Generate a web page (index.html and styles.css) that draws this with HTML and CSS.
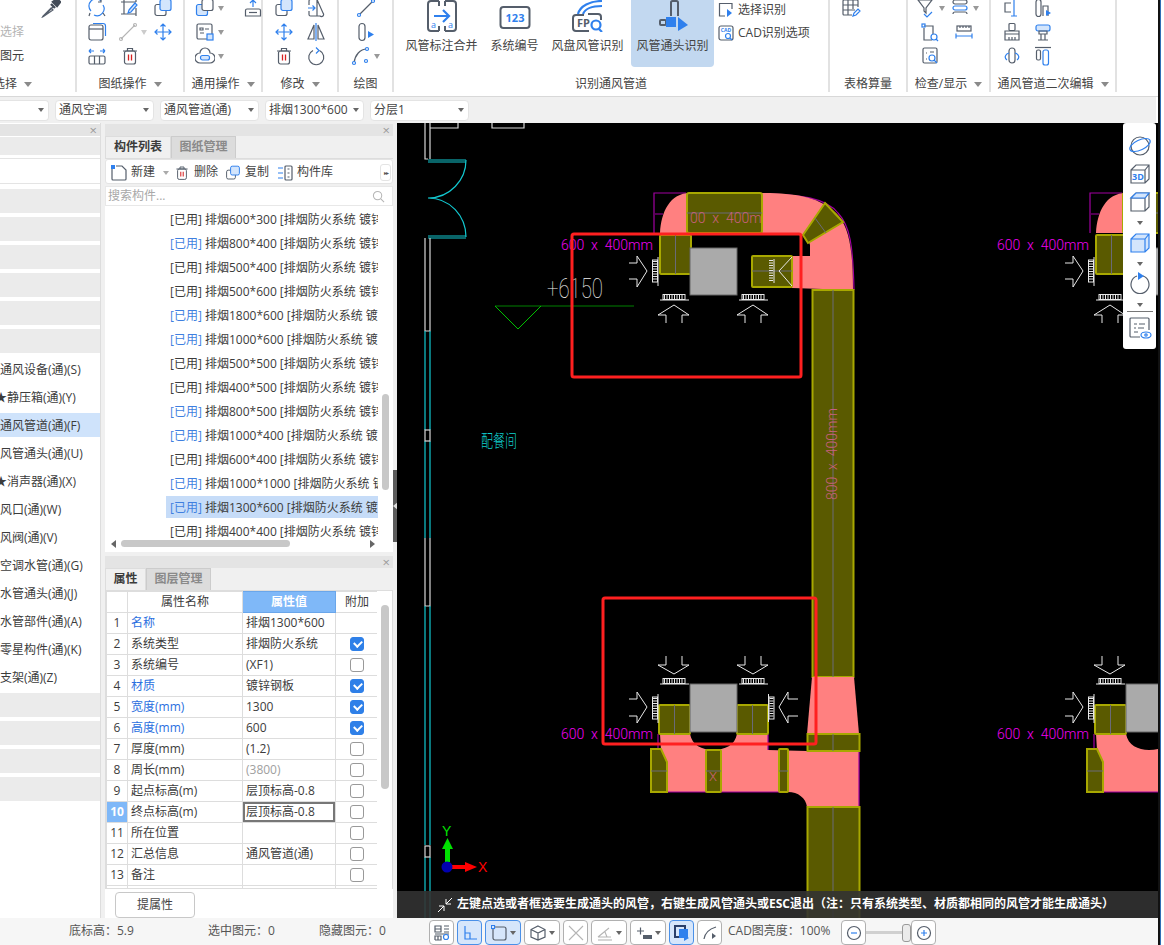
FILE: index.html
```html
<!DOCTYPE html>
<html lang="zh-CN">
<head>
<meta charset="utf-8">
<title>风管通头识别</title>
<link rel="stylesheet" href="styles.css">
</head>
<body>
<svg class="defs" width="0" height="0">
  <symbol id="i-overlap" viewBox="0 0 20 20"><rect x="2" y="6.500" width="11" height="11" rx="2" class="st"/><rect x="7" y="1.500" width="11" height="11" rx="2" class="bl lf"/></symbol>
  <symbol id="i-trash" viewBox="0 0 20 20"><path d="M3 5h14M7.500 5V2.500h5V5" class="st"/><rect x="4.500" y="5" width="11" height="13" rx="2" class="st"/><path d="M8.500 8.500v6M11.500 8.500v6" class="rd"/></symbol>
  <symbol id="i-move" viewBox="0 0 20 20"><path d="M10 2v16M2 10h16M7.500 4.500 10 2l2.500 2.500M7.500 15.500 10 18l2.500-2.500M4.500 7.500 2 10l2.500 2.500M15.500 7.500 18 10l-2.500 2.500" class="bl"/></symbol>
  <g id="grille-h"><path d="M0 6H29" class="wh"/><rect x="3" y="0.500" width="22" height="5" class="wh"/><path d="M4 3H24" class="hatch"/></g>
  <g id="grille-v"><path d="M6 0V29" class="wh"/><rect x="0.500" y="3" width="5" height="22" class="wh"/><path d="M3 4V24" class="hatch"/></g>
  <g id="arrow-up"><path d="M8 18V10H0L16 0 31 10H24V18" class="wh"/></g>
  <g id="arrow-down"><path d="M8 0V9H0L16 18 31 9H24V0" class="wh"/></g>
</svg>

<div class="page">
<div class="app">
  <header class="ribbon">
    <section class="grp g0">
      <div class="grp-body col">
        <div class="r end"><svg class="ic" viewBox="0 0 20 20"><path d="M3 18l9-9M2.500 18.500l-1 .5.500-1 8-8 2 2z" class="st"/><path d="M10 6l4 4M12 4l4-3 3 3-3 4z" class="dk"/></svg></div>
        <div class="r dim">选择</div>
        <div class="r">图元</div>
      </div>
      <div class="grp-label cut">选择<i class="caret"></i></div>
    </section>
    <section class="grp g1">
      <div class="grp-body grid3">
        <svg class="ic" viewBox="0 0 20 20"><path d="M4 13A7 7 0 0 1 14 3M16 7a7 7 0 0 1-9 10" class="bl"/><path d="M14 1v3h-3M16 15l2 3M3 15l-1 3" class="st"/></svg>
        <svg class="ic" viewBox="0 0 20 20"><path d="M1 4h15M4 1v15M16 1v3M1 16h15M16 10v8" class="st"/><path d="M9 12l6-7 2 2-6 7-3 1z" class="bl lf"/></svg>
        <svg class="ic"><use href="#i-overlap"/></svg>
        <svg class="ic" viewBox="0 0 20 20"><rect x="2" y="3" width="14" height="15" rx="2" class="st"/><path d="M2 7h14" class="st"/><path d="M6 1.500h10a2.500 2.500 0 0 1 2.500 2.500v10" class="bl"/></svg>
        <span class="with-caret faint"><svg class="ic" viewBox="0 0 20 20"><path d="M3 17 17 3" class="gr"/><circle cx="3" cy="17" r="1.500" class="gr"/><circle cx="17" cy="3" r="1.500" class="gr"/></svg><i class="caret"></i></span>
        <svg class="ic"><use href="#i-move"/></svg>
        <svg class="ic" viewBox="0 0 20 20"><path d="M2 5h5M13 5h5M2 5l2-2M2 5l2 2M18 5l-2-2M18 5l-2 2" class="bl"/><rect x="2" y="10" width="16" height="8" rx="1.500" class="st"/><path d="M7.500 10v8M12.500 10v8" class="st"/></svg>
        <svg class="ic"><use href="#i-trash"/></svg>
      </div>
      <div class="grp-label">图纸操作<i class="caret"></i></div>
    </section>
    <section class="grp g2">
      <div class="grp-body grid2">
        <span class="with-caret"><svg class="ic" viewBox="0 0 20 20"><rect x="1.500" y="6.500" width="11" height="11" rx="2" class="bl lf"/><rect x="7" y="1.500" width="11" height="11" rx="2" class="st wf"/></svg><i class="caret"></i></span>
        <svg class="ic" viewBox="0 0 20 20"><path d="M4 11h12a1.500 1.500 0 0 1 1.500 1.500V18h-15v-5.500A1.500 1.500 0 0 1 4 11z" class="st"/><path d="M6 14.500h8" class="st"/><path d="M10 9V2M7 5l3-3 3 3" class="bl"/></svg>
        <span class="with-caret"><svg class="ic" viewBox="0 0 20 20"><rect x="2" y="2" width="15" height="15" rx="1.500" class="st"/><path d="M5 6h3v2H5zM10 7h4M5 11h4" class="st"/><rect x="12" y="12" width="6" height="6" class="bl lf"/></svg><i class="caret"></i></span>
        <span></span>
        <span class="with-caret"><svg class="ic" viewBox="0 0 20 20"><path d="M5 7a5 5 0 0 1 10 0 5 5 0 0 1 0 10H5A5 5 0 0 1 5 7z" class="st"/><rect x="5.500" y="9.500" width="9" height="4.500" rx="2" class="bl lf"/></svg><i class="caret"></i></span>
        <span></span>
      </div>
      <div class="grp-label">通用操作<i class="caret"></i></div>
    </section>
    <section class="grp g3">
      <div class="grp-body grid2">
        <svg class="ic"><use href="#i-overlap"/></svg>
        <svg class="ic" viewBox="0 0 20 20"><path d="M3 7V3a1.500 1.500 0 0 1 1.500-1.500H11L17 15a2 2 0 0 1-3 3h-3M3 13v3.500A1.500 1.500 0 0 0 4.500 18H11M11 1.500V18" class="st"/><path d="M2 10h7M6.500 7.500 9 10l-2.500 2.500" class="bl"/></svg>
        <svg class="ic"><use href="#i-move"/></svg>
        <svg class="ic" viewBox="0 0 20 20"><path d="M8 3 2 17h6zM12 3l6 14h-6z" class="st"/><path d="M10 1v18" class="bl"/></svg>
        <svg class="ic"><use href="#i-trash"/></svg>
        <svg class="ic" viewBox="0 0 20 20"><path d="M7 4.500a7.500 7.500 0 1 0 6.500 0" class="st"/><path d="M10 1.500l3 3-3 3" class="bl"/></svg>
      </div>
      <div class="grp-label">修改<i class="caret"></i></div>
    </section>
    <section class="grp g4">
      <div class="grp-body col center">
        <div class="r"><svg class="ic" viewBox="0 0 20 20"><path d="M3 17 17 3" class="st"/><circle cx="3" cy="17" r="1.500" class="bl wf"/><circle cx="17" cy="3" r="1.500" class="bl wf"/></svg></div>
        <div class="r"><svg class="ic" viewBox="0 0 20 20"><rect x="3" y="1.500" width="6" height="17" rx="3" class="st"/><path d="M12 9v7l6-3.500z" class="solid"/></svg></div>
        <div class="r"><span class="with-caret"><svg class="ic" viewBox="0 0 20 20"><path d="M3 17C4 9 9 3 16 3" class="st"/><circle cx="3" cy="17" r="1.500" class="bl wf"/><circle cx="16" cy="3" r="1.500" class="bl wf"/><circle cx="15" cy="15" r="1.500" class="bl wf"/></svg><i class="caret"></i></span></div>
      </div>
      <div class="grp-label">绘图</div>
    </section>
    <section class="grp g5">
      <div class="grp-body bigs">
        <div class="big">
          <svg class="ic32" viewBox="0 0 32 32"><path d="M13 1H5a3 3 0 0 0-3 3v24a3 3 0 0 0 3 3h8M19 1h8a3 3 0 0 1 3 3v24a3 3 0 0 1-3 3h-8M13 1v5M19 1v5M13 26v5M19 26v5" class="st2"/><path d="M8 16h15M17 10l6 6-6 6" class="bl2"/><text x="5" y="28" class="ictext">a</text><text x="22" y="28" class="ictext">a</text></svg>
          <span>风管标注合并</span>
        </div>
        <div class="big">
          <svg class="ic32" viewBox="0 0 32 32"><rect x="1.500" y="7" width="29" height="21" rx="3" class="st2"/><text x="16" y="22" class="icnum">123</text></svg>
          <span>系统编号</span>
        </div>
        <div class="big">
          <svg class="ic32" viewBox="0 0 32 32"><path d="M6 14C8 6 18 1 30 1M11 14C13 9 20 6 30 6" class="bl2"/><path d="M16 14h10a3 3 0 0 1 3 3v3M17 31H4a3 3 0 0 1-3-3V18a3 3 0 0 1 3-3h8" class="st2"/><text x="5" y="27" class="icfp">FP</text><circle cx="24" cy="25" r="4.500" class="bl2"/><path d="M27 29l3 3" class="bl2"/></svg>
          <span>风盘风管识别</span>
        </div>
        <div class="big on">
          <svg class="ic32" viewBox="0 0 32 32"><path d="M14 16V2.500A1.500 1.500 0 0 1 15.500 1h4A1.500 1.500 0 0 1 21 2.500V16" class="st2"/><rect x="3" y="20" width="6" height="5" rx="1" class="st2"/><rect x="9" y="17" width="10" height="10" class="solid"/><path d="M21 17l10 8-10 6z" class="solid"/></svg>
          <span>风管通头识别</span>
        </div>
        <div class="smalls">
          <div class="small"><svg class="ic16" viewBox="0 0 16 16"><path d="M14 7V1.500H1.500V14H7" class="st"/><path d="M9 7v8l5-4z" class="solid"/></svg>选择识别</div>
          <div class="small"><svg class="ic16" viewBox="0 0 16 16"><rect x="1" y="1" width="14" height="14" rx="2" class="st"/><text x="8" y="7" class="iccad">CAD</text><circle cx="10" cy="11" r="2.500" class="bl"/><path d="M12 13l2 2" class="bl"/></svg>CAD识别选项</div>
        </div>
      </div>
      <div class="grp-label">识别通风管道</div>
    </section>
    <section class="grp g6">
      <div class="grp-body col">
        <div class="r"><svg class="ic" viewBox="0 0 20 20"><path d="M11 17H3a1 1 0 0 1-1-1V3a1 1 0 0 1 1-1h13a1 1 0 0 1 1 1v6M2 7h15M2 12h12M7 2v15M12 2v9" class="st"/><path d="M12 18l1-3 4-4 2 2-4 4z" class="bl"/></svg></div>
      </div>
      <div class="grp-label">表格算量</div>
    </section>
    <section class="grp g7">
      <div class="grp-body grid-g7">
        <span class="with-caret"><svg class="ic" viewBox="0 0 20 20"><path d="M2 2h14l-6 8v5l-2-2v-3z" class="st"/><path d="M8 16l3 3 5-5" class="bl"/></svg><i class="caret"></i></span>
        <span class="with-caret"><svg class="ic" viewBox="0 0 20 20"><rect x="3" y="2" width="14" height="4" rx="2" class="st"/><rect x="3" y="8" width="14" height="4" rx="2" class="bl"/><path d="M3 16a2 2 0 0 1 2-2h10a2 2 0 0 1 2 2" class="st"/></svg><i class="caret"></i></span>
        <svg class="ic" viewBox="0 0 20 20"><path d="M4 6v12h8M4 4h9v8" class="st"/><rect x="2" y="2" width="3" height="3" class="bl"/><circle cx="14" cy="15" r="3" class="bl"/><path d="M16 17l2 2" class="bl"/></svg>
        <svg class="ic" viewBox="0 0 20 20"><rect x="3" y="4" width="14" height="5" class="st"/><path d="M6 4v2M9 4v2M12 4v2M15 4v2" class="st"/><path d="M2 14h16M2 11.500v5M18 11.500v5" class="bl"/></svg>
        <svg class="ic" viewBox="0 0 20 20"><rect x="3" y="2" width="14" height="15" rx="1.500" class="st"/><path d="M10 6h4M6 7h1M6 13h1" class="st"/><circle cx="12" cy="12" r="3" class="bl"/><path d="M14 14l3 3" class="bl"/></svg>
        <span></span>
      </div>
      <div class="grp-label">检查/显示<i class="caret"></i></div>
    </section>
    <section class="grp g8">
      <div class="grp-body grid2 narrow">
        <svg class="ic" viewBox="0 0 20 20"><path d="M9 5H3v9h6" class="st"/><path d="M12 1v17M9 1h6M9 18h6" class="bl"/></svg>
        <svg class="ic" viewBox="0 0 20 20"><rect x="3" y="1.500" width="5" height="17" rx="2.500" class="st"/><path d="M10 18V8h5v10" class="st"/><path d="M13 12v6l5-3z" class="solid"/></svg>
        <svg class="ic" viewBox="0 0 20 20"><rect x="7" y="1.500" width="6" height="7" rx="1" class="st"/><path d="M3 9h14v3H3zM3 12v6h14v-6M7 15v3M10 15v3M13 15v3" class="st"/></svg>
        <svg class="ic" viewBox="0 0 20 20"><rect x="3" y="3" width="14" height="6" rx="2" class="bl lf"/><path d="M6 9h8v3H6zM8 12v6M12 12v6M5 18h10" class="st"/></svg>
        <svg class="ic" viewBox="0 0 20 20"><rect x="7" y="2" width="6" height="15" rx="3" class="st"/><path d="M7 7C3 8 2 12 5 14M13 7c4 1 5 5 2 7" class="bl"/></svg>
        <svg class="ic" viewBox="0 0 20 20"><path d="M2 1.500h16" class="st"/><rect x="3.500" y="4" width="4" height="10" rx="1.500" class="st"/><rect x="10" y="4" width="5.500" height="15" rx="2" class="bl"/></svg>
      </div>
      <div class="grp-label">通风管道二次编辑<i class="caret"></i></div>
    </section>
  </header>

  <nav class="combos">
    <div class="combo first"><i class="caret dark"></i></div>
    <div class="combo">通风空调<i class="caret dark"></i></div>
    <div class="combo">通风管道(通)<i class="caret dark"></i></div>
    <div class="combo">排烟1300*600<i class="caret dark"></i></div>
    <div class="combo">分层1<i class="caret dark"></i></div>
  </nav>

  <main class="main">
    <aside class="left">
      <div class="strip"><span class="x">×</span></div>
      <div class="band top"></div>
      <div class="searchbox"></div>
      <div class="tree">
        <div class="band"></div><div class="band"></div><div class="band"></div><div class="band"></div><div class="band"></div><div class="band"></div>
        <div class="node">通风设备(通)(S)</div>
        <div class="node star">★静压箱(通)(Y)</div>
        <div class="node sel">通风管道(通)(F)</div>
        <div class="node">风管通头(通)(U)</div>
        <div class="node star">★消声器(通)(X)</div>
        <div class="node">风口(通)(W)</div>
        <div class="node">风阀(通)(V)</div>
        <div class="node">空调水管(通)(G)</div>
        <div class="node">水管通头(通)(J)</div>
        <div class="node">水管部件(通)(A)</div>
        <div class="node">零星构件(通)(K)</div>
        <div class="node">支架(通)(Z)</div>
        <div class="band"></div><div class="band"></div><div class="band"></div><div class="band"></div>
      </div>
    </aside>

    <section class="mid">
      <div class="panel list-panel">
        <div class="strip"><span class="x">×</span></div>
        <div class="tabs"><span class="tab on">构件列表</span><span class="tab">图纸管理</span></div>
        <div class="tools">
          <span class="tool t-new"><svg class="ic16" viewBox="0 0 16 16"><path d="M1 4v10a1 1 0 0 0 1 1h12a1 1 0 0 0 1-1V5l-4-4H5" class="st"/><rect x="0" y="0" width="4" height="4" class="blfill"/></svg>新建<i class="caret lt"></i></span>
          <span class="tool t-del"><svg class="ic16"><use href="#i-trash"/></svg>删除</span>
          <span class="tool t-copy"><svg class="ic16"><use href="#i-overlap"/></svg>复制</span>
          <span class="tool t-lib"><svg class="ic16" viewBox="0 0 16 16"><path d="M1 3h5M1 8h5M1 13h5" class="bl"/><rect x="8" y="1" width="7" height="14" rx="1" class="st"/><path d="M10.500 4h2M10.500 8h2M10.500 12h2" class="st"/></svg>构件库</span>
          <span class="more">▸▸</span>
        </div>
        <div class="search"><span>搜索构件...</span><svg class="ic13" viewBox="0 0 14 14"><circle cx="6" cy="6" r="4.500" class="gr"/><path d="M9.500 9.500 13 13" class="gr"/></svg></div>
        <div class="list-body">
          <div class="items">
            <div class="item"><b>[已用]</b> 排烟600*300 [排烟防火系统 镀锌钢板]</div>
            <div class="item u"><b>[已用]</b> 排烟800*400 [排烟防火系统 镀锌钢板]</div>
            <div class="item"><b>[已用]</b> 排烟500*400 [排烟防火系统 镀锌钢板]</div>
            <div class="item"><b>[已用]</b> 排烟500*600 [排烟防火系统 镀锌钢板]</div>
            <div class="item u"><b>[已用]</b> 排烟1800*600 [排烟防火系统 镀锌钢板]</div>
            <div class="item u"><b>[已用]</b> 排烟1000*600 [排烟防火系统 镀锌钢板]</div>
            <div class="item"><b>[已用]</b> 排烟500*500 [排烟防火系统 镀锌钢板]</div>
            <div class="item"><b>[已用]</b> 排烟400*500 [排烟防火系统 镀锌钢板]</div>
            <div class="item u"><b>[已用]</b> 排烟800*500 [排烟防火系统 镀锌钢板]</div>
            <div class="item u"><b>[已用]</b> 排烟1000*400 [排烟防火系统 镀锌钢板]</div>
            <div class="item"><b>[已用]</b> 排烟600*400 [排烟防火系统 镀锌钢板]</div>
            <div class="item u"><b>[已用]</b> 排烟1000*1000 [排烟防火系统 镀锌钢板]</div>
            <div class="item u sel"><b>[已用]</b> 排烟1300*600 [排烟防火系统 镀锌钢板]</div>
            <div class="item"><b>[已用]</b> 排烟400*400 [排烟防火系统 镀锌钢板]</div>
          </div>
          <div class="vtrack"><div class="vthumb"></div></div>
        </div>
        <div class="htrack"><i class="tri tri-l"></i><div class="hthumb"></div><i class="tri tri-r"></i></div>
      </div>

      <div class="panel prop-panel">
        <div class="strip"><span class="x">×</span></div>
        <div class="tabs"><span class="tab on small-tab">属性</span><span class="tab">图层管理</span></div>
        <div class="prop-body">
          <div class="table-wrap">
            <table class="props">
              <colgroup><col class="c1"><col class="c2"><col class="c3"><col class="c4"></colgroup>
              <tr class="head"><th></th><th>属性名称</th><th class="hi">属性值</th><th>附加</th></tr>
              <tr><td class="n">1</td><td class="link">名称</td><td>排烟1300*600</td><td></td></tr>
              <tr><td class="n">2</td><td>系统类型</td><td>排烟防火系统</td><td><i class="cb on"></i></td></tr>
              <tr><td class="n">3</td><td>系统编号</td><td>(XF1)</td><td><i class="cb"></i></td></tr>
              <tr><td class="n">4</td><td class="link">材质</td><td>镀锌钢板</td><td><i class="cb on"></i></td></tr>
              <tr><td class="n">5</td><td class="link">宽度(mm)</td><td>1300</td><td><i class="cb on"></i></td></tr>
              <tr><td class="n">6</td><td class="link">高度(mm)</td><td>600</td><td><i class="cb on"></i></td></tr>
              <tr><td class="n">7</td><td>厚度(mm)</td><td>(1.2)</td><td><i class="cb"></i></td></tr>
              <tr><td class="n">8</td><td>周长(mm)</td><td class="mute">(3800)</td><td><i class="cb"></i></td></tr>
              <tr><td class="n">9</td><td>起点标高(m)</td><td>层顶标高-0.8</td><td><i class="cb"></i></td></tr>
              <tr><td class="n act">10</td><td>终点标高(m)</td><td class="edit">层顶标高-0.8</td><td><i class="cb"></i></td></tr>
              <tr><td class="n">11</td><td>所在位置</td><td></td><td><i class="cb"></i></td></tr>
              <tr><td class="n">12</td><td>汇总信息</td><td>通风管道(通)</td><td><i class="cb"></i></td></tr>
              <tr><td class="n">13</td><td>备注</td><td></td><td><i class="cb"></i></td></tr>
              <tr><td class="n">14</td><td></td><td></td><td></td></tr>
            </table>
          </div>
          <div class="ptrack"><div class="pthumb"></div></div>
        </div>
        <div class="btn-row"><button class="pick">提属性</button></div>
      </div>
    </section>

    <div class="split"><div class="handle"><i class="tri tri-l pale"></i></div></div>

    <section class="canvas">
      <svg class="cad" viewBox="397 123 761 795" width="761" height="795">
        <g id="unit">
          <!-- top magenta outlines -->
          <path d="M686 193H654V233M655 214H663" class="mg"/>
          <path d="M762 194C800 194 826 198 838 213 850 226 853 245 854 290" class="mg"/>
          <path d="M660 233C661 212 670 193 690 193H770C800 194 820 198 836 213 848 225 853 245 853 290L792 288V256H810V245C808 236 800 233 790 233Z" class="pink"/>
          <rect x="687" y="193" width="75" height="40" rx="2" class="ol"/>
          <path d="M687 213H762" class="cl"/>
          <text x="690" y="223" class="dimtxt">00  x  400m</text>
          <path d="M825 203 843 222 808 243 803 235Z" class="ol"/>
          <path d="M815 218 826 233" class="cl"/>
          <rect x="660" y="235" width="31" height="39" rx="1" class="ol"/>
          <path d="M675.500 235V274" class="cl"/>
          <rect x="752" y="256" width="40" height="31" rx="1" class="ol"/>
          <path d="M752 271H792" class="cl"/>
          <rect x="690" y="248" width="47" height="47" class="gray"/>
          <rect x="812.500" y="290" width="41" height="387" class="ol sq"/>
          <path d="M833 290V677" class="cl"/>
          <text transform="translate(837 500) rotate(-90)" class="dimtxt">800  x  400mm</text>
          <text x="561" y="250" class="mgtxt">600  x  400mm</text>
          <!-- top arrows -->
          <path d="M629 263H637V256L647 271 637 287V279H629" class="wh"/>
          <use href="#grille-v" x="652" y="257"/>
          <use href="#grille-h" x="660" y="294"/>
          <use href="#grille-h" x="739" y="294"/>
          <use href="#arrow-up" x="658" y="305"/>
          <use href="#arrow-up" x="737" y="305"/>
          <path d="M792 257 779 271 792 286" class="wh"/>
          <path d="M774 259V283" class="wh"/><path d="M771 260V282" class="hatch"/>
          <!-- lower part -->
          <path d="M812 677H854L859 734H807Z" class="pink"/>
          <path d="M660 734H690C692 745 702 750 713 750 725 750 735 745 737 734H768V750L807 751V734H859V807H807C806 798 798 792 788 792H667V762L661 750Z" class="pink"/>
          <path d="M658 734V752L661 750M768 734V750M788 792H667M859 734V807" class="mg"/>
          <rect x="807.500" y="734" width="52" height="17" class="ol sq"/>
          <path d="M833 734V751" class="cl"/>
          <path d="M651 749H661L667 762V792H651Z" class="ol"/>
          <path d="M651 771H667" class="cl"/>
          <rect x="807.500" y="807" width="52" height="115" class="ol sq"/>
          <path d="M833 807V920" class="cl"/>
          <rect x="659" y="705" width="31" height="29" rx="1" class="ol"/>
          <path d="M674.500 705V734" class="cl"/>
          <rect x="737" y="705" width="31" height="29" rx="1" class="ol"/>
          <path d="M752.500 705V734" class="cl"/>
          <rect x="690" y="684" width="47" height="48" class="gray"/>
          <text x="561" y="739" class="mgtxt">600  x  400mm</text>
          <path d="M629 699H637V692L647 707 637 723V716H629" class="wh"/>
          <path d="M798 699H788V692L779 707 788 723V716H798" class="wh"/>
          <use href="#grille-v" x="652" y="694"/>
          <path d="M768.500 694V722" class="wh"/><rect x="769" y="697" width="5" height="22" class="wh"/><path d="M771.500 698V718" class="hatch"/>
          <use href="#grille-h" x="660" y="678"/>
          <use href="#grille-h" x="739" y="678"/>
          <use href="#arrow-down" x="658" y="656"/>
          <use href="#arrow-down" x="737" y="656"/>
        </g>
        <use href="#unit" x="436"/>

        <!-- connectors of the left unit only -->
        <rect x="706" y="750" width="15" height="42" rx="1" class="ol"/>
        <path d="M706 771H721" class="cl"/>
        <text x="709" y="781" class="xtxt">X</text>
        <rect x="779" y="749" width="9" height="43" rx="1" class="ol"/>
        <path d="M779 771H788" class="cl"/>

        <!-- walls and door -->
        <path d="M425 123V159H428M430 123V159M430 128H458V123M492 123V128H524V123" class="wall"/>
        <path d="M428 160H466M428 162H466M428 236H466M428 238H466" class="cy"/>
        <path d="M466 160C466 180 450 198 428 198 450 198 466 216 466 237" class="cy"/>
        <path d="M425 238V331H430V238" class="wall"/>
        <path d="M425 331V430M430 331V430M425 441V538M430 441V538" class="cy"/>
        <rect x="425" y="430" width="5" height="11" class="wall"/>
        <path d="M425 538V606H430V538" class="wall"/>
        <path d="M425 606V845M430 606V845M425 857V918M430 857V918" class="cy"/>
        <rect x="425" y="846" width="5" height="11" class="wall"/>

        <text x="547" y="298" textLength="56" lengthAdjust="spacingAndGlyphs" class="elev">+6150</text>
        <path d="M495 306H634" class="gn1"/>
        <path d="M495 306 518 329 541 306" class="gn2"/>
        <text x="481" y="447" textLength="36" lengthAdjust="spacingAndGlyphs" class="room">配餐间</text>

        <rect x="572" y="234" width="229" height="143" rx="2" class="red"/>
        <rect x="603" y="598" width="213" height="146" rx="2" class="red"/>

        <!-- axes -->
        <rect x="445" y="848" width="5" height="14" fill="#00e000"/>
        <path d="M447.500 838 442 849H453Z" fill="#00e000"/>
        <rect x="450" y="865" width="15" height="4" fill="#ff0000"/>
        <path d="M477 867 465 862V872Z" fill="#ff0000"/>
        <circle cx="447" cy="867" r="5.500" fill="#0000b0"/>
        <text x="442" y="836" class="axy">Y</text>
        <text x="478" y="872" class="axx">X</text>
      </svg>

      <aside class="viewbox">
        <svg class="ic24" viewBox="0 0 24 24"><ellipse cx="12" cy="12" rx="9" ry="9" class="st"/><ellipse cx="12" cy="11" rx="11" ry="5" transform="rotate(-25 12 11)" class="bl"/></svg>
        <svg class="ic24" viewBox="0 0 24 24"><path d="M3 8 8 3H21V17L17 21H3ZM3 8H17V21M17 8 21 3" class="st"/><text x="4" y="18" class="ic3d">3D</text></svg>
        <svg class="ic24" viewBox="0 0 24 24"><path d="M3 8 8 3H21V17L17 21H3ZM3 8H17V21M17 8 21 3" class="st"/><path d="M3 8 8 3H21L17 8Z" class="bl lf"/></svg>
        <i class="caret dark"></i>
        <svg class="ic24" viewBox="0 0 24 24"><path d="M3 8 8 3H21V17L17 21H3ZM3 8H17V21M17 8 21 3" class="bl lf"/></svg>
        <i class="caret dark"></i>
        <svg class="ic24" viewBox="0 0 24 24"><path d="M9 4a9 9 0 1 0 6 0" class="st"/><path d="M10 0l6 4-6 4z" class="solid"/></svg>
        <i class="caret dark"></i>
        <div class="vb-line"></div>
        <svg class="ic24" viewBox="0 0 24 24"><path d="M12 21H3a1 1 0 0 1-1-1V3a1 1 0 0 1 1-1h17a1 1 0 0 1 1 1v11M6 8h3M11 8h6M6 12h2M10 12h6M6 16h4" class="st"/><ellipse cx="18" cy="19" rx="5" ry="3" class="bl"/><circle cx="18" cy="19" r="1.200" class="bl"/></svg>
      </aside>

      <div class="tip">
        <svg class="ic16 tip-ic" viewBox="0 0 16 16"><path d="M1 15 7 9M7 9H2M7 9v5M15 1 9 7M9 7h5M9 7V2" class="tipline"/></svg>
        <span>左键点选或者框选要生成通头的风管，右键生成风管通头或ESC退出（注：只有系统类型、材质都相同的风管才能生成通头）</span>
      </div>
    </section>
  </main>

  <footer class="status">
    <span class="st-a">底标高：5.9</span>
    <span class="st-b">选中图元：0</span>
    <span class="st-c">隐藏图元：0</span>
    <div class="sbtns">
      <span class="sb"><svg class="ic16" viewBox="0 0 16 16"><path d="M1 1h6v6H1zM1 4h6M10 1h5M10 4h5M10 7h5M1 9h14M1 15V11h6v4H1M4 11v4" class="st"/><circle cx="12" cy="12" r="2.500" class="bl"/></svg></span>
      <span class="sb on"><svg class="ic16" viewBox="0 0 16 16"><path d="M3 1v13h12M3 8h5v6" class="bl"/></svg></span>
      <span class="sb on w"><svg class="ic16" viewBox="0 0 16 16"><rect x="2" y="2" width="13" height="13" rx="2" class="st"/><rect x="0.500" y="0.500" width="3" height="3" class="bl wf"/></svg><i class="caret dark"></i></span>
      <span class="sb w"><svg class="ic16" viewBox="0 0 16 16"><path d="M8 1 15 4.500V12L8 15 1 12V4.500ZM1 4.500 8 8 15 4.500M8 8V15" class="st"/></svg><i class="caret dark"></i></span>
      <span class="sb"><svg class="ic16" viewBox="0 0 16 16"><path d="M1 1 15 15M15 1 1 15" class="gr"/></svg></span>
      <span class="sb w"><svg class="ic16" viewBox="0 0 16 16"><path d="M1 12 12 3M1 12H14M8 7l2 5" class="gr"/><path d="M1 15h14" class="gr"/></svg><i class="caret dark"></i></span>
      <span class="sb w"><svg class="ic16" viewBox="0 0 16 16"><path d="M1 6h7M4.500 2.500v7" class="st"/><rect x="7" y="10" width="9" height="4" fill="#555e6b"/></svg><i class="caret dark"></i></span>
      <span class="sb on"><svg class="ic16" viewBox="0 0 16 16"><rect x="1" y="1" width="10" height="11" class="st4"/><rect x="5" y="4" width="9" height="9" class="blfill"/><path d="M10 10v6l5-3z" class="solid"/></svg></span>
      <span class="sb"><svg class="ic16" viewBox="0 0 16 16"><path d="M2 14C3 8 7 4 14 2" class="st"/><path d="M10 8v6l4-3z" fill="#555e6b"/></svg></span>
    </div>
    <span class="bright">CAD图亮度：100%</span>
    <span class="sb"><svg class="ic16" viewBox="0 0 16 16"><circle cx="8" cy="8" r="6.500" class="st"/><path d="M5 8h6" class="bl"/></svg></span>
    <div class="slider"><div class="knob"></div></div>
    <span class="sb"><svg class="ic16" viewBox="0 0 16 16"><circle cx="8" cy="8" r="6.500" class="st"/><path d="M5 8h6M8 5v6" class="bl"/></svg></span>
  </footer>
</div>
<div class="edge"></div>
</div>
</body>
</html>
```

FILE: styles.css
```css
* { box-sizing: border-box; }
html, body { margin: 0; padding: 0; }
body { width: 1164px; height: 945px; overflow: hidden; background: #fff; font: 12px/1.2 "Open Sans", "Noto Sans CJK SC", sans-serif; color: #3c3c3c; }
.defs { position: absolute; }
.page { display: flex; width: 1164px; height: 945px; overflow: hidden; }
.app { width: 1158px; height: 945px; display: flex; flex-direction: column; flex: none; }
.edge { width: 6px; height: 945px; flex: none; background: linear-gradient(90deg, #111 0 2px, #2f6fb5 2px 3px, #fff 3px); }

/* svg paint classes */
svg { fill: none; }
.st { stroke: #555e6b; stroke-width: 1.2; fill: none; }
.st2 { stroke: #555e6b; stroke-width: 2; fill: none; }
.st4 { stroke: #2a3f6a; stroke-width: 2; fill: none; }
.dk { stroke: #444c58; stroke-width: 2.4; fill: #444c58; }
.bl { stroke: #2f80ed; stroke-width: 1.2; fill: none; }
.bl2 { stroke: #2f80ed; stroke-width: 2.2; fill: none; }
.lf { fill: #d3e5fc; }
.wf { fill: #fff; }
.rd { stroke: #d62020; stroke-width: 1.3; }
.gr { stroke: #b5b5b5; stroke-width: 1.1; fill: none; }
.solid { fill: #2f80ed; stroke: none; }
.blfill { fill: #2f80ed; }
.ic { width: 20px; height: 20px; flex: none; }
.ic16 { width: 16px; height: 16px; flex: none; }
.ic13 { width: 13px; height: 13px; flex: none; }
.ic24 { width: 24px; height: 24px; flex: none; }
.ic32 { width: 32px; height: 32px; flex: none; }
.ictext { font-size: 9px; fill: #2f80ed; }
.icnum { font-size: 11px; font-weight: 700; fill: #2f80ed; text-anchor: middle; }
.icfp { font-size: 11px; font-weight: 700; fill: #555e6b; }
.iccad { font-size: 5px; font-weight: 700; fill: #2f80ed; text-anchor: middle; }
.ic3d { font-size: 9px; font-weight: 700; fill: #2f80ed; }

.caret { display: inline-block; width: 0; height: 0; border-left: 4px solid transparent; border-right: 4px solid transparent; border-top: 5px solid #8a8a8a; margin-left: 7px; vertical-align: 1px; }
.caret.dark { border-left-width: 3.500px; border-right-width: 3.500px; border-top: 4px solid #666; }
.caret.lt { border-left-width: 3px; border-right-width: 3px; border-top: 4px solid #aaa; margin-left: 4px; }
.tri { display: block; width: 0; height: 0; border-top: 4px solid transparent; border-bottom: 4px solid transparent; flex: none; }
.tri-l { border-right: 5px solid #666; }
.tri-r { border-left: 5px solid #666; }
.tri-l.pale { border-right-color: #ddd; }

/* ribbon */
.ribbon { display: flex; height: 97px; flex: none; background: #fff; border-bottom: 1px solid #d8d8d8; overflow: hidden; }
.grp { display: flex; flex-direction: column; height: 92px; flex: none; border-right: 2px solid #e2e2e2; }
.grp-body { height: 81px; margin-top: -4px; flex: none; }
.grp-label { height: 15px; display: flex; align-items: center; justify-content: center; color: #444; white-space: nowrap; }
.grp-label.cut { justify-content: flex-start; margin-left: -7px; }
.g0 { width: 77px; } .g1 { width: 108px; } .g2 { width: 78px; } .g3 { width: 76px; } .g4 { width: 55px; }
.g5 { width: 436px; } .g6 { width: 78px; } .g7 { width: 83px; } .g8 { width: 126px; }
.col { display: flex; flex-direction: column; }
.center { align-items: center; }
.r { height: 24px; display: flex; align-items: center; flex: none; }
.r.end { justify-content: flex-end; padding-right: 14px; }
.r.dim { color: #b4b4b4; }
.g6 .r { padding-left: 11px; }
.grid3, .grid2, .grid-g7 { display: grid; grid-auto-rows: 24px; align-items: center; justify-items: center; }
.grid3 { grid-template-columns: 33px 33px 33px; padding-left: 3px; }
.g2 .grid2 { grid-template-columns: 48px 28px; justify-items: start; padding-left: 10px; }
.g3 .grid2 { grid-template-columns: 32px 32px; padding-left: 5px; }
.grid2.narrow { grid-template-columns: 31px 31px; padding-left: 5px; }
.grid-g7 { grid-template-columns: 34px 34px; padding-left: 5px; }
.with-caret { display: inline-flex; align-items: center; }
.with-caret .caret { margin-left: 3px; border-top-color: #999; border-left-width: 3.500px; border-right-width: 3.500px; }
.faint .caret { border-top-color: #ccc; }
.grid3 .faint { margin-left: 5px; }

.bigs { display: flex; padding-left: 11px; margin-top: 0; height: 77px; }
.big { width: 73px; height: 67px; display: flex; flex-direction: column; align-items: center; white-space: nowrap; }
.big span { margin-top: 7px; color: #444; }
.big .ic32 { height: 32px; }
.big.on { width: 83px; background: #c2d8f0; border-radius: 0 0 4px 4px; margin-left: 7px; }
.smalls { display: flex; flex-direction: column; margin-left: 4px; gap: 7px; padding-top: 2px; }
.small { display: flex; align-items: center; gap: 4px; height: 16px; white-space: nowrap; color: #444; }

/* combos */
.combos { height: 26px; flex: none; display: flex; gap: 6px; align-items: center; background: #f0f0f0; margin-right: 2px; }
.combo { width: 99px; height: 21px; background: #fff; border: 1px solid #e4e4e4; border-radius: 4px; display: flex; align-items: center; justify-content: space-between; padding: 0 4px 0 3px; white-space: nowrap; color: #444; }
.combo .caret { margin-left: 0; }
.combo.first { width: 49px; border-left: 0; border-radius: 0 4px 4px 0; justify-content: flex-end; }

/* main */
.main { flex: 1; display: flex; min-height: 0; background: #f0f0f0; }
.left { width: 101px; flex: none; background: #fff; border-right: 1px solid #ddd; overflow: hidden; padding-top: 1px; }
.strip { height: 12px; background: #e4e4e4; display: flex; justify-content: flex-end; align-items: center; padding-right: 3px; flex: none; }
.x { color: #9a9a9a; font-size: 13px; line-height: 12px; }
.band { height: 24px; background: #ebebeb; flex: none; }
.band.top { height: 18px; margin-top: 1px; }
.searchbox { height: 26px; margin-top: 3px; border-top: 1px solid #e4e4e4; border-bottom: 1px solid #e4e4e4; }
.tree { display: flex; flex-direction: column; gap: 4px; margin-top: 5px; }
.node { height: 24px; line-height: 26px; white-space: nowrap; flex: none; color: #3c3c3c; }
.node.sel { background: #cfe3fb; }
.node.star { margin-left: -5px; }

.mid { width: 288px; margin-left: 4px; flex: none; display: flex; flex-direction: column; padding-top: 1px; gap: 5px; }
.panel { background: #f0f0f0; display: flex; flex-direction: column; }
.list-panel { height: 427px; }
.prop-panel { flex: 1; min-height: 0; }
.tabs { height: 23px; display: flex; flex: none; border-bottom: 1px solid #ddd; }
.tab { width: 65px; display: flex; align-items: center; justify-content: center; background: #dcdcdc; color: #8a8a8a; border: 1px solid #ccc; border-bottom: 0; font-weight: 700; }
.tab.on { width: 66px; background: #f0f0f0; color: #3c3c3c; border-color: #ddd; }
.tab.small-tab { width: 41px; }
.tools { height: 25px; flex: none; background: #fff; border: 1px solid #e4e4e4; border-radius: 3px; display: flex; align-items: center; padding: 2px 0 0 5px; }
.tool { display: inline-flex; align-items: center; gap: 4px; white-space: nowrap; color: #444; }
.t-del { margin-left: 5px; } .t-copy { margin-left: 7px; } .t-lib { margin-left: 8px; }
.more { margin-left: auto; margin-right: 1px; width: 11px; height: 17px; line-height: 17px; font-size: 6px; letter-spacing: -1px; border: 1px solid #e4e4e4; border-radius: 3px; text-align: center; color: #555; }
.search { height: 20px; flex: none; margin-top: 2px; background: #fff; border: 1px solid #e8e8e8; display: flex; align-items: center; justify-content: space-between; padding: 0 7px 0 2px; color: #a8a8a8; }
.list-body { display: flex; height: 332px; flex: none; background: #fff; }
.items { flex: none; width: 273px; padding: 2px 0 0 61px; overflow: hidden; }
.item { height: 22px; line-height: 24px; margin-bottom: 2px; white-space: nowrap; overflow: hidden; padding-left: 4px; color: #3c3c3c; }
.item b { font-weight: 400; }
.item.u b { color: #3f7fe0; }
.item.sel { background: #c6dcf8; }
.vtrack { flex: 1; padding: 188px 4px 0 4px; }
.vthumb { height: 96px; background: #c8c8c8; border-radius: 4px; }
.htrack { height: 14px; flex: none; background: #fff; display: flex; align-items: center; padding: 0 18px 3px 6px; }
.hthumb { width: 169px; height: 7px; background: #c8c8c8; border-radius: 4px; margin: 0 auto 0 5px; }
.prop-body { display: flex; height: 298px; flex: none; background: #fff; overflow: hidden; border-right: 1px solid #ddd; }
.table-wrap { width: 272px; flex: none; overflow: hidden; border-left: 1px solid #ddd; border-bottom: 1px solid #ddd; }
.props { border-collapse: collapse; table-layout: fixed; width: 272px; }
.c1 { width: 21px; } .c2 { width: 115px; } .c3 { width: 93px; } .c4 { width: 43px; }
.props th, .props td { height: 21px; border: 1px solid #ddd; padding: 0 3px; font-weight: 400; white-space: nowrap; overflow: hidden; color: #3c3c3c; }
.props th { text-align: center; }
.props th.hi { background: #7fb8f8; color: #fff; border-color: #6aa6ea; font-weight: 700; }
.props tr > td:first-child { text-align: center; padding: 0; }
.props tr > td:last-child { text-align: center; padding: 0; line-height: 0; }
.props td.link { color: #2b6fe0; }
.props td.mute { color: #a0a0a0; }
.props td.act { background: #7fb8f8; color: #fff; font-weight: 700; }
.props td.edit { box-shadow: inset 0 0 0 2px #777; }
.cb { display: inline-block; width: 14px; height: 14px; border: 1px solid #999; border-radius: 3px; background: #fff; position: relative; vertical-align: middle; }
.cb.on { background: #2f80e8; border-color: #2f80e8; }
.cb.on::after { content: ""; position: absolute; left: 3px; top: 2px; width: 6px; height: 4px; border-left: 2px solid #fff; border-bottom: 2px solid #fff; transform: rotate(-45deg); }
.ptrack { flex: 1; padding: 14px 3px 0 4px; }
.pthumb { height: 184px; background: #c8c8c8; border-radius: 4px; }
.btn-row { flex: 1; background: #fff; padding: 3px 0 0 10px; }
.pick { width: 80px; height: 26px; background: #fff; border: 1px solid #c8c8c8; border-radius: 4px; font: inherit; color: #444; padding: 0; }
.split { width: 4px; flex: none; padding-top: 347px; }
.handle { height: 72px; background: #5c5c5c; display: flex; align-items: center; justify-content: center; overflow: hidden; }

/* canvas */
.canvas { position: relative; width: 761px; flex: none; background: #000; overflow: hidden; }
.cad { display: block; }
.pink { fill: #ff8080; stroke: none; }
.ol { fill: #5a5a00; stroke: #a8a800; stroke-width: 2; }
.cl { stroke: #6a6a78; stroke-width: 1; fill: none; }
.gray { fill: #aaa; stroke: #666; stroke-width: 1; }
.mg { stroke: #a000a0; stroke-width: 1.2; fill: none; }
.wh { stroke: #e8e8e8; stroke-width: 1; fill: none; }
.hatch { stroke: #e8e8e8; stroke-width: 4; stroke-dasharray: 1 1.500; fill: none; }
.dimtxt { font: 300 14px Roboto, "Liberation Sans", sans-serif; fill: #c8607e; white-space: pre; }
.mgtxt { font: 300 14px Roboto, "Liberation Sans", sans-serif; fill: #f000f0; white-space: pre; }
.xtxt { font: 300 13px Roboto, "Liberation Sans", sans-serif; fill: #c8607e; }
.wall { stroke: #d8d8d8; stroke-width: 1.200; fill: none; }
.cy { stroke: #12c8d0; stroke-width: 1.200; fill: none; }
.elev { font: 100 28px Roboto, "Liberation Sans", sans-serif; fill: #f0f0f0; }
.gn1 { stroke: #008000; stroke-width: 1.200; fill: none; }
.gn2 { stroke: #00c000; stroke-width: 1; fill: none; }
.room { font: 300 17px "Noto Sans CJK SC", sans-serif; fill: #10d0d0; }
.red { fill: none; stroke: #ff2020; stroke-width: 3; }
.axy { font: 14px "Liberation Sans", sans-serif; fill: #00e000; }
.axx { font: 14px "Liberation Sans", sans-serif; fill: #ff0000; }
.viewbox { position: absolute; left: 726px; top: 0; width: 33px; height: 226px; background: #fff; border-radius: 3px; display: flex; flex-direction: column; align-items: center; padding-top: 7px; }
.viewbox .caret { margin: 7px 0 2px; }
.viewbox .ic24 { margin-top: 4px; }
.vb-line { width: 26px; height: 1px; background: #777; margin: 2px 0 0; flex: none; }
.tip { position: absolute; left: 0; right: 0; bottom: 0; height: 27px; background: rgba(50, 50, 50, .9); display: flex; align-items: center; color: #fff; font-weight: 700; white-space: nowrap; padding-left: 40px; }
.tip-ic { margin-right: 4px; }
.tipline { stroke: #fff; stroke-width: 1; fill: none; }

/* status */
.status { height: 27px; flex: none; display: flex; align-items: center; background: #f6f6f6; color: #555; white-space: nowrap; padding-left: 69px; }
.st-a { width: 139px; } .st-b { width: 111px; } .st-c { width: 110px; }
.sbtns { display: flex; gap: 3px; margin-top: 2px; }
.sb { width: 25px; height: 25px; flex: none; display: inline-flex; align-items: center; justify-content: center; background: #fff; border: 1px solid #b0b0b0; border-radius: 4px; margin-top: 2px; }
.sbtns .sb { margin-top: 0; }
.sb.w { width: 36px; gap: 3px; }
.sb.w .caret { margin-left: 0; }
.sb.on { background: #d6e6fb; border-color: #4a90e8; }
.bright { margin-left: 6px; width: 113px; }
.slider { width: 45px; height: 3px; background: #d0d0d0; margin-top: 2px; display: flex; justify-content: flex-end; align-items: center; flex: none; }
.knob { width: 9px; height: 18px; background: #ebebeb; border: 1px solid #999; border-radius: 3px; flex: none; }
```
